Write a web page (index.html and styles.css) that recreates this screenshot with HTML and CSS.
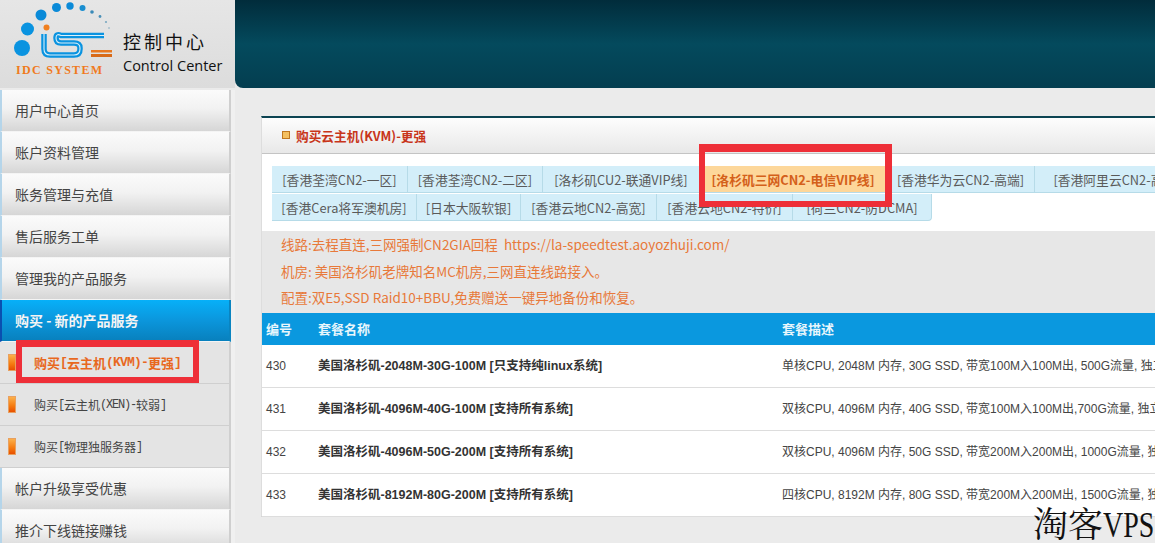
FILE: index.html
```html
<!DOCTYPE html>
<html lang="zh-CN">
<head>
<meta charset="utf-8">
<title>控制中心</title>
<link rel="stylesheet" href="styles.css">
</head>
<body>
<div class="page">
  <header class="top">
    <div class="brand">
      <div class="logo">
        <svg class="logo-mark" width="112" height="60" viewBox="0 0 112 60">
          <circle cx="21" cy="48" r="8" fill="#0a93e0"/><circle cx="26.500" cy="29" r="6.500" fill="#0a93e0"/><circle cx="40" cy="15" r="5.500" fill="#0a8ad8"/><circle cx="55.500" cy="7.500" r="4.500" fill="#0a8ad8"/><circle cx="69" cy="6" r="3.700" fill="#0a8ad8"/><circle cx="81.500" cy="8" r="3" fill="#1a8ed0"/><circle cx="91" cy="12" r="1.800" fill="#3a8ab8"/><circle cx="99" cy="16.500" r="1.400" fill="#4a90b8"/><circle cx="105" cy="22" r="1.100" fill="#7aa8c0"/><circle cx="108" cy="28" r="1" fill="#a8c0cc"/>
          <circle cx="45.500" cy="27.500" r="3" fill="#f08020"/>
          <path d="M43 34V49q0 6 6 6h24q6 0 6-6v-1q0-5-6-5H60q-5 0-5-5t5-2.500h43" fill="none" stroke="#0a93e0" stroke-width="5.500"/>
          <path d="M43 34V49q0 6 6 6h24q6 0 6-6v-1q0-5-6-5H60q-5 0-5-5t5-2.500h43" fill="none" stroke="#d8f0fa" stroke-width="1.100"/>
          <rect x="90" y="50" width="21" height="2.500" fill="#e87820"/><rect x="90" y="54" width="21" height="3" fill="#d86a18"/>
        </svg>
        <div class="logo-name">IDC SYSTEM</div>
      </div>
      <div class="brand-text">
        <div class="brand-cn">控制中心</div>
        <div class="brand-en">Control Center</div>
      </div>
    </div>
    <div class="banner"></div>
  </header>
  <div class="body-row">
    <nav class="side">
      <a class="item">用户中心首页</a>
      <a class="item">账户资料管理</a>
      <a class="item">账务管理与充值</a>
      <a class="item">售后服务工单</a>
      <a class="item">管理我的产品服务</a>
      <a class="item active">购买 - 新的产品服务</a>
      <a class="sub current"><span class="bar"></span>购买<span class="lat">[</span>云主机<span class="lat">(KVM)-</span>更强<span class="lat">]</span></a>
      <a class="sub"><span class="bar"></span>购买<span class="lat">[</span>云主机<span class="lat">(XEN)-</span>较弱<span class="lat">]</span></a>
      <a class="sub"><span class="bar"></span>购买<span class="lat">[</span>物理独服务器<span class="lat">]</span></a>
      <a class="item">帐户升级享受优惠</a>
      <a class="item">推介下线链接赚钱</a>
    </nav>
    <main class="panel">
      <h1 class="title"><span class="title-icon"></span>购买云主机(KVM)-更强</h1>
      <div class="tabs">
        <div class="tab-row">
          <a class="tab w1">[香港荃湾CN2-一区]</a>
          <a class="tab w2">[香港荃湾CN2-二区]</a>
          <a class="tab w3">[洛杉矶CU2-联通VIP线]</a>
          <a class="tab w4 on">[洛杉矶三网CN2-电信VIP线]</a>
          <a class="tab w5">[香港华为云CN2-高端]</a>
          <a class="tab w6">[香港阿里云CN2-高端]</a>
        </div>
        <div class="tab-row">
          <a class="tab w7">[香港Cera将军澳机房]</a>
          <a class="tab w8">[日本大阪软银]</a>
          <a class="tab w9">[香港云地CN2-高宽]</a>
          <a class="tab w10">[香港云地CN2-特价]</a>
          <a class="tab w11">[荷兰CN2-防DCMA]</a>
        </div>
      </div>
      <div class="notice">
        <p>线路:去程直连,三网强制CN2GIA回程 &nbsp;https://la-speedtest.aoyozhuji.com/</p>
        <p>机房: 美国洛杉矶老牌知名MC机房,三网直连线路接入。</p>
        <p>配置:双E5,SSD Raid10+BBU,免费赠送一键异地备份和恢复。</p>
      </div>
      <div class="row head"><span class="c1">编号</span><span class="c2">套餐名称</span><span class="c3">套餐描述</span></div>
      <div class="row"><span class="c1">430</span><span class="c2 name">美国洛杉矶-2048M-30G-100M [只支持纯linux系统]</span><span class="c3">单核CPU, 2048M 内存, 30G SSD, 带宽100M入100M出, 500G流量, 独立IP</span></div>
      <div class="row"><span class="c1">431</span><span class="c2 name">美国洛杉矶-4096M-40G-100M [支持所有系统]</span><span class="c3">双核CPU, 4096M 内存, 40G SSD, 带宽100M入100M出,700G流量, 独立IP</span></div>
      <div class="row"><span class="c1">432</span><span class="c2 name">美国洛杉矶-4096M-50G-200M [支持所有系统]</span><span class="c3">双核CPU, 4096M 内存, 50G SSD, 带宽200M入200M出, 1000G流量, 独立IP</span></div>
      <div class="row"><span class="c1">433</span><span class="c2 name">美国洛杉矶-8192M-80G-200M [支持所有系统]</span><span class="c3">四核CPU, 8192M 内存, 80G SSD, 带宽200M入200M出, 1500G流量, 独立IP</span></div>
    </main>
  </div>
  <div class="mark mark-side"></div>
  <div class="mark mark-tab"></div>
  <div class="watermark">淘客<span class="wm-lat">VPS</span></div>
</div>
</body>
</html>
```
FILE: styles.css
```css
* { box-sizing: border-box; }
html, body { margin: 0; height: 100%; overflow: hidden; }
body { background: #ebebeb; font: 12px "Liberation Sans", "Noto Sans CJK SC", sans-serif; color: #333; }
.page { position: relative; width: 1155px; height: 543px; overflow: hidden; }

.top { display: flex; height: 88px; background: #e9e9e9; }
.brand { width: 235px; display: flex; background: linear-gradient(#e6e6e6, #dcdcdc); flex: none; }
.logo { width: 116px; padding: 0 0 0 1px; }
.logo-mark { display: block; }
.logo-name { font: bold 12px/14px "Liberation Serif", serif; letter-spacing: 1.300px; color: #f07a1c; margin: 3px 0 0 15px; white-space: nowrap; }
.brand-text { padding: 29px 0 0 7px; color: #111; }
.brand-cn { font: 18px/24px "Noto Sans CJK SC", sans-serif; letter-spacing: 3px; }
.brand-en { font: 14.500px/20px "Open Sans", "Liberation Sans", sans-serif; margin-top: 3px; }
.banner { flex: 1; border-bottom-left-radius: 8px; background: linear-gradient(#012c3b, #044a5d 50%, #043e50); }

.body-row { display: flex; padding-top: 2px; }
.side { width: 235px; flex: none; background: #f0f0f0; }
.item, .sub { display: flex; align-items: center; width: 231px; height: 42px; color: #444; font-family: "Noto Sans CJK SC", sans-serif; }
.item { font-size: 14px; padding: 0 0 2px 13px; background: linear-gradient(#fbfbfb, #f2f2f2 45%, #d6d6d6); border-left: 2px solid #b5d5ea; border-right: 2px solid #cfcfcf; border-bottom: 1px solid #f4f4f4; }
.item.active { color: #f4f4f4; font-weight: bold; background: linear-gradient(#07b0f8, #0b96dc 50%, #0880bd); border-left-color: #0a4fb0; border-right-color: #0a84c0; }
.sub { font-size: 12px; background: #e4e4e4; border-bottom: 1px solid #cfcfcf; border-right: 2px solid #cfcfcf; padding: 0 0 0 8px; }
.sub .lat { font-family: "Liberation Mono", monospace; letter-spacing: -1.200px; }
.sub.current { color: #e8681e; font-size: 13px; font-weight: bold; }
.sub.current .lat { letter-spacing: -.8px; }
.bar { width: 8px; height: 17px; margin-right: 18px; background: linear-gradient(#fbb04a, #f57a10 60%, #e85000); border: 1px solid #e8a060; flex: none; }

.panel { width: 960px; flex: none; margin: 26px 0 0 26px; height: 401px; background: #fff; border-top: 2px solid #0c4452; border-left: 1px solid #ddd; border-bottom: 1px solid #ccc; }
.title { display: flex; align-items: center; height: 36px; margin: 0; padding: 0 0 1px 20px; font-size: 12.700px; font-weight: bold; font-family: "Noto Sans CJK SC", sans-serif; color: #c8351a; background: linear-gradient(#fdfdfd, #e8e8e8); border-bottom: 1px solid #c4c4c4; }
.title-icon { width: 8px; height: 8px; margin-right: 6px; border: 1px solid #c07820; background: #f4c060; }
.tabs { padding: 12px 0 0 10px; height: 77px; }
.tab-row { display: flex; height: 28px; }
.tab { display: flex; align-items: center; justify-content: center; flex: none; height: 27px; background: #d3eef9; border-right: 1px solid #b6dbe8; border-bottom: 1px solid #b6dbe8; color: #5a5a5a; font-size: 12.800px; font-family: "Noto Sans CJK SC", sans-serif; white-space: nowrap; }
.tab.on { background: #fdd79a; color: #d4601a; font-weight: bold; }
.w1 { width: 136px; } .w2 { width: 135px; } .w3 { width: 157px; } .w4 { width: 187px; } .w5 { width: 148px; } .w6 { width: 165px; }
.w7 { width: 145px; } .w8 { width: 104px; } .w9 { width: 136px; } .w10 { width: 136px; } .w11 { width: 139px; border-radius: 0 0 4px 0; }

.notice { height: 82px; background: #e7e7e7; color: #e8793a; font-size: 13.500px; font-family: "Noto Sans CJK SC", "Liberation Sans", sans-serif; }
.notice p { margin: 0 0 0 19px; height: 26.500px; line-height: 26.500px; white-space: nowrap; }
.row { display: flex; align-items: center; height: 43px; line-height: 16px; background: #fff; border-bottom: 1px solid #ddd; color: #444; white-space: nowrap; }
.row.head { height: 32px; background: #0a98df; color: #e8f6fc; font-weight: bold; font-size: 13px; border: 0; font-family: "Noto Sans CJK SC", sans-serif; }
.c1 { width: 56px; padding-left: 4px; flex: none; }
.c2 { width: 464px; flex: none; }
.name { font-size: 12.500px; font-weight: bold; color: #333; }

.mark { position: absolute; border: solid #ee2f38; }
.mark-side { left: 16px; top: 340px; width: 183px; height: 43px; border-width: 7px 6px 6px 6px; }
.mark-tab { left: 699px; top: 144px; width: 193px; height: 63px; border-width: 8px 7px 6px 6px; }
.watermark { position: absolute; right: 0; bottom: -5px; font: 35px/44px "Noto Serif CJK SC", "Liberation Serif", serif; color: #111; }
.wm-lat { display: inline-block; width: 52px; font-family: "Liberation Serif", serif; transform: scaleX(.8); transform-origin: left; }
```
